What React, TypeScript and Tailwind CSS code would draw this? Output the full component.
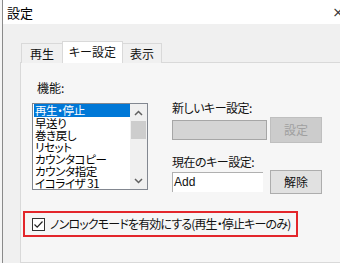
import React from 'react';

const items = ['再生・停止', '早送り', '巻き戻し', 'リセット', 'カウンタコピー', 'カウンタ指定', 'イコライザ 31'];

function Tab({ label, active, width }: { label: string; active?: boolean; width: string }) {
  if (active) {
    return (
      <div className={`${width} h-[22px] bg-white border border-b-0 border-[#d9d9d9] -mx-px flex items-center justify-center pb-[2px] relative z-10`}>
        {label}
      </div>
    );
  }
  return (
    <div className={`${width} h-[20px] bg-[#f0f0f0] border border-b-0 border-[#d9d9d9] flex items-center justify-center`}>
      {label}
    </div>
  );
}

export default function App() {
  return (
    <div className="w-[340px] h-[263px] overflow-hidden flex bg-white font-['Noto_Sans_CJK_JP','Noto_Sans',sans-serif] text-[12px] leading-[14px] text-[#111] [font-feature-settings:'palt'_1] [font-variant-east-asian:proportional-width]">
      <div className="w-[2px] shrink-0 bg-[#f5f5f5]" />
      <div className="w-px shrink-0 bg-[#8a8a8a]" />
      <div className="flex-1 flex flex-col">
        {/* title bar */}
        <div className="h-[24px] bg-white flex items-center justify-between pl-[4px] shrink-0">
          <span className="text-[13px] leading-[15px] text-black">設定</span>
          <span className="text-[14px] -mr-[4px] text-[#333] font-['DejaVu_Sans',sans-serif]">×</span>
        </div>

        {/* body */}
        <div className="flex-1 bg-[#f0f0f0] pl-[17px] pt-[17px] flex flex-col">
          <div className="flex items-end pl-[1px] h-[22px] -mb-px relative z-10">
            <Tab label="再生" width="w-[42px]" />
            <Tab label="キー設定" active width="w-[61px]" />
            <Tab label="表示" width="w-[40px]" />
          </div>

          <div className="flex-1 border border-r-0 border-[#d9d9d9] bg-[#f6f6f6] pl-[11px] pt-[18px]">
            <div className="flex">
              {/* left column */}
              <div className="w-[116px] shrink-0">
                <div className="pl-[5px]">機能:</div>
                <div className="mt-[8px] h-[87px] border border-[#828790] bg-white flex">
                  <div className="flex-1 pl-px overflow-hidden">
                    {items.map((it, i) => (
                      <div
                        key={it}
                        className={`leading-[12px] pl-[1px] whitespace-nowrap text-[11.5px] tracking-[-0.4px] ${i === 0 ? 'h-[13px] bg-[#0078d7] text-white' : 'h-[12px] text-black'}`}
                      >
                        {it}
                      </div>
                    ))}
                  </div>
                  <div className="w-[17px] shrink-0 bg-[#f0f0f0] flex flex-col">
                    <div className="h-[17px] flex items-center justify-center">
                      <svg width="9" height="6" viewBox="0 0 9 6">
                        <path d="M1 5 L4.5 1.5 L8 5" fill="none" stroke="#606060" strokeWidth="1.5" />
                      </svg>
                    </div>
                    <div className="h-[18px] mx-[1px] bg-[#cdcdcd]" />
                    <div className="flex-1" />
                    <div className="h-[17px] flex items-center justify-center">
                      <svg width="9" height="6" viewBox="0 0 9 6">
                        <path d="M1 1 L4.5 4.5 L8 1" fill="none" stroke="#606060" strokeWidth="1.5" />
                      </svg>
                    </div>
                  </div>
                </div>
              </div>

              {/* right column */}
              <div className="ml-[24px] pt-[20px]">
                <div className="tracking-[-0.5px]">新しいキー設定:</div>
                <div className="flex items-center mt-[2px]">
                  <div className="w-[95px] h-[20px] bg-[#d4d4d4] border border-[#a6a6a6]" />
                  <div className="ml-[3px] w-[52px] h-[26px] bg-[#cccccc] border border-[#bfbfbf] flex items-center justify-center text-[#a0a0a0]">
                    設定
                  </div>
                </div>
                <div className="mt-[12px] tracking-[-0.5px]">現在のキー設定:</div>
                <div className="flex items-center mt-[1px]">
                  <div className="w-[91px] h-[20px] bg-white border-l border-t border-[#b0b0b0] pl-[1px] leading-[18px] font-['Liberation_Sans',sans-serif]">
                    Add
                  </div>
                  <div className="ml-[7px] w-[52px] h-[24px] bg-[#e1e1e1] border border-[#adadad] flex items-center justify-center">
                    解除
                  </div>
                </div>
              </div>
            </div>

            {/* non-lock mode */}
            <div className="mt-[17px] ml-[-9px] w-[275px] h-[26px] border-2 border-[#e3262b] flex items-center pl-[7px]">
              <div className="w-[13px] h-[13px] border border-[#333] bg-white flex items-center justify-center shrink-0">
                <svg width="11" height="11" viewBox="0 0 11 11">
                  <path d="M1.5 5.5 L4.2 8.2 L9.5 2.5" fill="none" stroke="#222" strokeWidth="1.2" />
                </svg>
              </div>
              <span className="ml-[5px] whitespace-nowrap tracking-[-0.85px]">ノンロックモードを有効にする（再生・停止キーのみ）</span>
            </div>
          </div>
        </div>
      </div>
    </div>
  );
}
